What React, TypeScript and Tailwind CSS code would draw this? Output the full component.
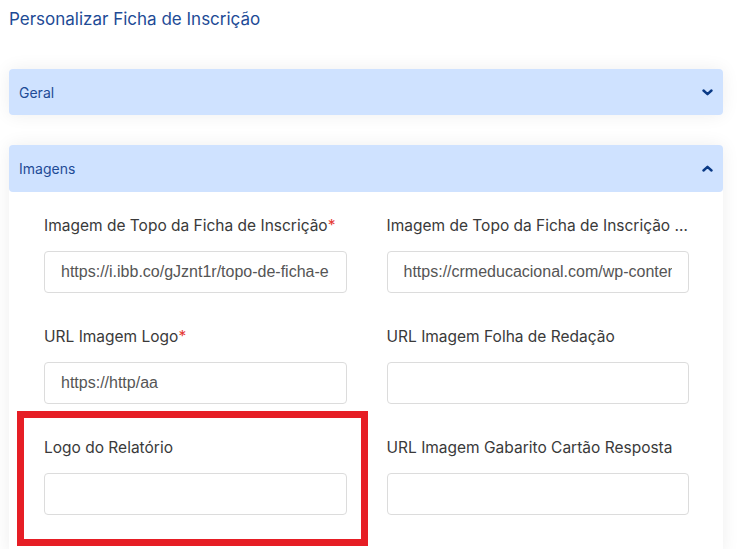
import React from 'react'

function Chevron({ up }: { up?: boolean }) {
  return (
    <svg width="11" height="7" viewBox="0 0 11 7" className={up ? 'rotate-180' : ''}>
      <path d="M1.5 1.5 L5.5 5.2 L9.5 1.5" fill="none" stroke="#0b3a86" strokeWidth="2.4" strokeLinecap="round" strokeLinejoin="round" />
    </svg>
  )
}

interface FieldProps {
  label: string
  required?: boolean
  value?: string
  highlight?: boolean
}

function Field({ label, required, value, highlight }: FieldProps) {
  return (
    <div className="relative min-w-0">
      {highlight && (
        <div className="absolute left-[-27px] right-[-21px] top-[-26px] bottom-[-31px] border-[7px] border-[#e61e25] pointer-events-none" />
      )}
      <label className="block h-[22px] leading-[22px] mb-[14px] text-[15.5px] text-[#3a3a3a] whitespace-nowrap overflow-hidden">
        {label}
        {required && <span className="text-[#e53935]">*</span>}
      </label>
      <input
        readOnly
        defaultValue={value}
        className="block w-full h-[42px] px-[16px] rounded-[4px] border border-[#dcdcdc] bg-white text-[16px] text-[#555] outline-none"
        style={{ fontFamily: '"Liberation Sans", Arial, sans-serif' }}
      />
    </div>
  )
}

export default function App() {
  return (
    <div className="w-[742px] h-[549px] overflow-hidden bg-white" style={{ fontFamily: 'Inter, "Open Sans", sans-serif' }}>
      <div className="pl-[9px] pr-[19px] pt-[7px]">
        <h1 className="text-[17px] leading-[24px] text-[#1e4b96]">Personalizar Ficha de Inscrição</h1>

        <div className="mt-[38px] rounded-[4px] shadow-[0_0_18px_rgba(0,0,0,0.07)]">
          <div className="h-[46px] flex items-center justify-between pl-[10px] pr-[10px] bg-[#cfe2ff] rounded-[4px]">
            <span className="text-[14px] text-[#1e4b96]">Geral</span>
            <Chevron />
          </div>
        </div>

        <div className="mt-[30px] rounded-[4px] shadow-[0_0_18px_rgba(0,0,0,0.07)] bg-white">
          <div className="h-[47px] flex items-center justify-between pl-[10px] pr-[10px] bg-[#cfe2ff] rounded-[4px]">
            <span className="text-[14px] text-[#1e4b96]">Imagens</span>
            <Chevron up />
          </div>
          <div className="pt-[23px] pl-[35px] pr-[34px] pb-[40px] grid grid-cols-2 gap-x-[40px] gap-y-[33px]">
            <Field label="Imagem de Topo da Ficha de Inscrição" required value="https://i.ibb.co/gJznt1r/topo-de-ficha-e" />
            <Field label="Imagem de Topo da Ficha de Inscrição …" value="https://crmeducacional.com/wp-content/uploads/topo.png" />
            <Field label="URL Imagem Logo" required value="https://http/aa" />
            <Field label="URL Imagem Folha de Redação" />
            <Field label="Logo do Relatório" highlight />
            <Field label="URL Imagem Gabarito Cartão Resposta" />
          </div>
        </div>
      </div>
    </div>
  )
}
